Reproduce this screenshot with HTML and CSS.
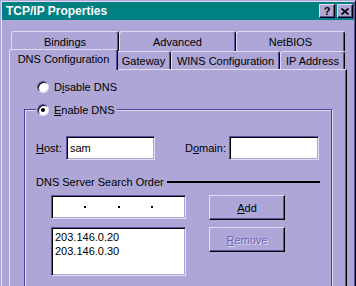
FILE: index.html
```html
<!DOCTYPE html>
<html lang="en">
<head>
    <meta charset="UTF-8">
    <title>TCP/IP Properties</title>
    <link rel="stylesheet" href="styles.css">
</head>
<body>
    <div class="window">
        <div class="titlebar">
            <span class="title">TCP/IP Properties</span>
            <span class="caption-buttons">
                <span class="cap-btn">?</span>
                <span class="cap-btn">
                    <svg width="8" height="7" viewBox="0 0 8 7"><path d="M0.5 0.5 L7.5 6.5 M7.5 0.5 L0.5 6.5" stroke="#000" stroke-width="1.6"/></svg>
                </span>
            </span>
        </div>

        <div class="tabs">
            <div class="tab-row back">
                <div class="tab tab-bindings">Bindings</div>
                <div class="tab tab-advanced">Advanced</div>
                <div class="tab tab-netbios">NetBIOS</div>
            </div>
            <div class="tab-row front">
                <div class="tab tab-dns active">DNS Configuration</div>
                <div class="tab tab-gateway">Gateway</div>
                <div class="tab tab-wins">WINS Configuration</div>
                <div class="tab tab-ip">IP Address</div>
            </div>
        </div>

        <div class="panel">
            <div class="option-row">
                <span class="radio"></span>
                <span>D<u>i</u>sable DNS</span>
            </div>

            <fieldset class="group">
                <legend class="option-row">
                    <span class="radio checked"></span>
                    <span><u>E</u>nable DNS</span>
                </legend>

                <div class="field-row">
                    <label class="host-label"><u>H</u>ost:</label>
                    <div class="textbox host-box">sam</div>
                    <label class="domain-label">D<u>o</u>main:</label>
                    <div class="textbox domain-box"></div>
                </div>

                <div class="heading-row">
                    <span>DNS Server Search Order</span>
                    <span class="heading-line"></span>
                </div>

                <div class="server-grid">
                    <div class="textbox ip-box">
                        <span class="dot"></span>
                        <span class="dot"></span>
                        <span class="dot"></span>
                    </div>
                    <div class="button"><u>A</u>dd</div>
                    <div class="textbox list-box">
                        <div>203.146.0.20</div>
                        <div>203.146.0.30</div>
                    </div>
                    <div class="button disabled"><u>R</u>emove</div>
                </div>
            </fieldset>
        </div>
    </div>
</body>
</html>
```

FILE: styles.css
```css
* {
    box-sizing: border-box;
}

body {
    margin: 0;
    background-color: #ada6d6;
    font-family: "Liberation Sans", Arial, sans-serif;
    font-size: 11px;
    color: #000;
    overflow: hidden;
}

.window {
    width: 356px;
    height: 286px;
    padding: 1px;
    border-top: 1px solid #ada6d6;
    border-left: 1px solid #ada6d6;
    border-right: 1px solid #000;
    box-shadow: inset 1px 1px 0 #e0dcf6, inset -1px 0 0 #5a51a6;
    overflow: hidden;
}

.titlebar {
    height: 18px;
    background-color: #008080;
    display: flex;
    align-items: center;
    justify-content: space-between;
    padding: 0 1px 0 4px;
}

.title {
    color: white;
    font-weight: bold;
    font-size: 12px;
}

.caption-buttons {
    display: flex;
    gap: 2px;
}

.cap-btn {
    width: 16px;
    height: 14px;
    background-color: #ada6d6;
    border-top: 1px solid #e0dcf6;
    border-left: 1px solid #e0dcf6;
    border-right: 1px solid #000;
    border-bottom: 1px solid #000;
    box-shadow: inset -1px -1px 0 #5a51a6;
    display: flex;
    align-items: center;
    justify-content: center;
    font-weight: bold;
    font-size: 11px;
    line-height: 1;
}

.tabs {
    margin-top: 11px;
    padding-left: 9px;
}

.tab-row {
    display: flex;
}

.tab {
    background-color: #ada6d6;
    border-top: 1px solid #e0dcf6;
    border-left: 1px solid #e0dcf6;
    border-right: 1px solid #000;
    border-radius: 3px 3px 0 0;
    box-shadow: inset -1px 0 0 #5a51a6;
    display: flex;
    align-items: center;
    justify-content: center;
}

.back .tab {
    height: 20px;
}

.front {
    height: 18px;
}

.front .tab {
    height: 18px;
}

.tab-bindings { width: 108px; }
.tab-advanced { width: 117px; }
.tab-netbios { width: 109px; }
.tab-dns { width: 105px; }
.tab-gateway { width: 55px; }
.tab-wins { width: 109px; }
.tab-ip { width: 65px; }

.front .tab.active {
    height: 21px;
    width: 109px;
    margin: -2px -2px -1px -2px;
    padding-bottom: 2px;
    position: relative;
    z-index: 1;
}

.panel {
    width: 338px;
    height: 217px;
    margin-left: 7px;
    border-top: 1px solid #e0dcf6;
    border-left: 1px solid #e0dcf6;
    border-right: 1px solid #000;
    box-shadow: inset -1px 0 0 #5a51a6;
    padding-top: 10px;
    overflow: hidden;
}

.option-row {
    display: flex;
    align-items: center;
    height: 13px;
    gap: 5px;
    padding-left: 27px;
}

.radio {
    width: 12px;
    height: 12px;
    border-radius: 50%;
    background-color: white;
    border: 1px solid;
    border-color: #5a51a6 #e0dcf6 #e0dcf6 #5a51a6;
    box-shadow: inset 1px 1px 0 #000;
    display: flex;
    align-items: center;
    justify-content: center;
}

.radio.checked::after {
    content: "";
    width: 4px;
    height: 4px;
    border-radius: 50%;
    background-color: #000;
}

.group {
    margin: 10px 0 0 14px;
    width: 308px;
    height: 186px;
    padding: 0 11px 0 11px;
    border: 1px solid #4b44a6;
    box-shadow: inset 1px 1px 0 #e0dcf6, 1px 1px 0 #e0dcf6;
}

.group legend {
    padding: 0 2px 0 1px;
    background-color: #ada6d6;
}

.field-row {
    display: flex;
    align-items: center;
    height: 24px;
    margin-top: 20px;
}

.host-label {
    width: 30px;
}

.host-box {
    width: 89px;
}

.domain-label {
    width: 44px;
    margin-left: 30px;
}

.domain-box {
    width: 90px;
}

.textbox {
    height: 24px;
    background-color: white;
    border: 1px solid;
    border-color: #5a51a6 #e0dcf6 #e0dcf6 #5a51a6;
    box-shadow: inset 1px 1px 0 #000, inset -1px -1px 0 #ada6d6;
    display: flex;
    align-items: center;
    padding-left: 3px;
}

.heading-row {
    display: flex;
    align-items: center;
    height: 13px;
    margin-top: 15px;
}

.heading-line {
    flex: 1;
    height: 2px;
    background-color: #000;
    margin-left: 3px;
}

.server-grid {
    display: grid;
    grid-template-columns: 135px 76px;
    grid-template-rows: 24px 49px;
    column-gap: 23px;
    row-gap: 8px;
    margin-top: 7px;
    padding-left: 15px;
    align-items: start;
}

.ip-box {
    justify-content: space-evenly;
    padding-left: 0;
}

.dot {
    width: 2px;
    height: 2px;
    background-color: #000;
}

.list-box {
    height: 49px;
    flex-direction: column;
    align-items: flex-start;
    padding: 2px 3px;
    line-height: 14px;
}

.button {
    height: 25px;
    border-top: 1px solid #e0dcf6;
    border-left: 1px solid #e0dcf6;
    border-right: 1px solid #000;
    border-bottom: 1px solid #000;
    box-shadow: inset -1px -1px 0 #5a51a6;
    display: flex;
    align-items: center;
    justify-content: center;
}

.button.disabled {
    color: #6e66b4;
    text-shadow: 1px 1px 0 #e0dcf6;
}
```
